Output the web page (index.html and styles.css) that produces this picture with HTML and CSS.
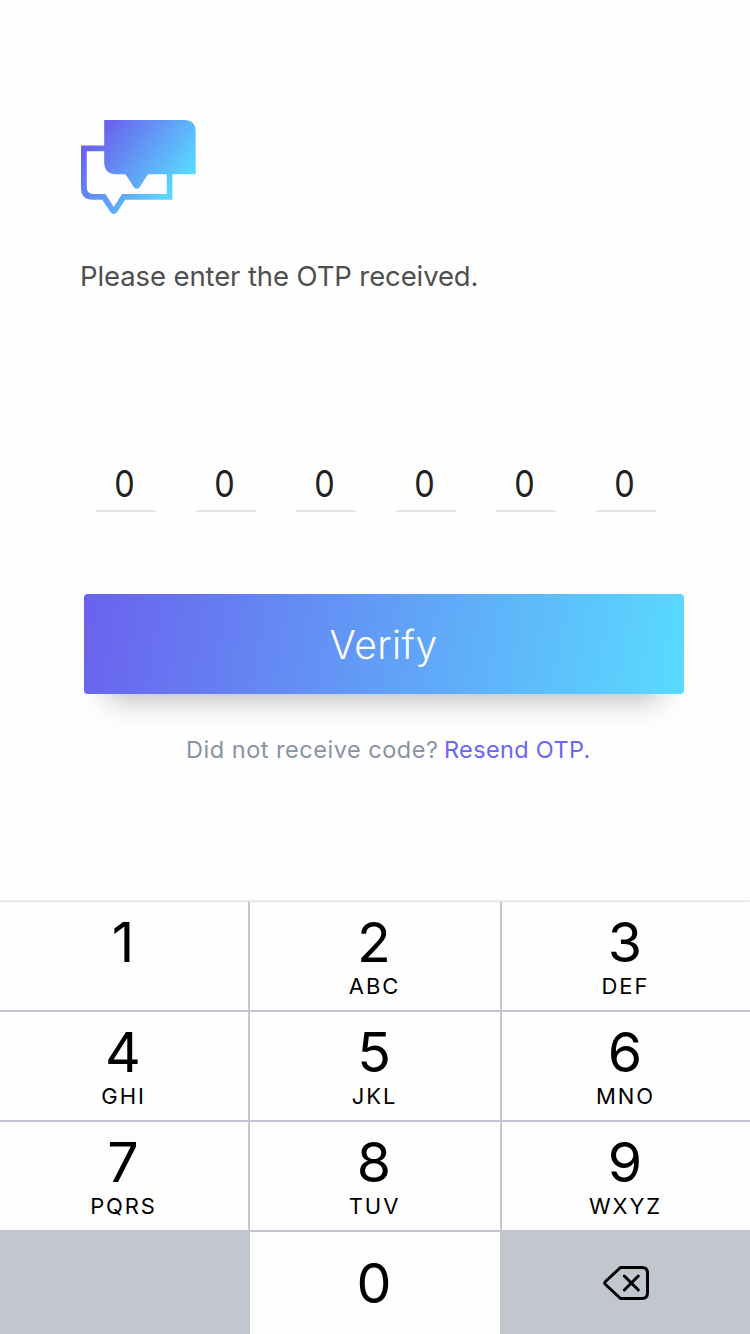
FILE: index.html
```html
<!DOCTYPE html>
<html lang="en">
<head>
<meta charset="utf-8">
<title>Verify OTP</title>
<link rel="stylesheet" href="styles.css">
</head>
<body>
<main class="screen">
  <section class="content">
    <svg class="logo" width="116" height="96" viewBox="80 119 116 96" aria-hidden="true">
      <defs>
        <linearGradient id="front" gradientUnits="userSpaceOnUse" x1="108" y1="120" x2="188" y2="180"><stop offset="0" stop-color="#6a61ee"/><stop offset="1" stop-color="#59dbff"/></linearGradient>
        <linearGradient id="back" gradientUnits="userSpaceOnUse" x1="86" y1="146" x2="164" y2="206"><stop offset="0" stop-color="#6a61ee"/><stop offset="1" stop-color="#59dbff"/></linearGradient>
      </defs>
      <path fill="url(#back)" fill-rule="evenodd" d="M81 145.4H105V151.2H86.8V187.5Q86.8 194 93 194H105.5L113.7 207L122 194H166.8V174H172.4V199.8H125.2L118 210.8Q113.7 217.8 109.5 210.8L102.2 199.8H93Q81 199.8 81 188Z"/>
      <path fill="url(#front)" d="M104.2 120H184Q195.7 120 195.7 132V174.3H148.5Q146 177 142 183.5Q136.8 194 131.5 183.5Q127.5 177 125 174.3H116.5Q104.2 174.3 104.2 162Z"/>
    </svg>
    <h1 class="prompt">Please enter the OTP received.</h1>
    <div class="otp">
      <div class="otp-cell"><span class="otp-digit">0</span></div>
      <div class="otp-cell"><span class="otp-digit">0</span></div>
      <div class="otp-cell"><span class="otp-digit">0</span></div>
      <div class="otp-cell"><span class="otp-digit">0</span></div>
      <div class="otp-cell"><span class="otp-digit">0</span></div>
      <div class="otp-cell"><span class="otp-digit">0</span></div>
    </div>
    <button class="verify" type="button">Verify</button>
    <p class="resend"><span class="question">Did not receive code?</span><a class="resend-link">Resend OTP.</a></p>
  </section>
  <section class="keypad">
    <div class="key"><span class="num">1</span></div>
    <div class="key"><span class="num">2</span><span class="letters">ABC</span></div>
    <div class="key"><span class="num">3</span><span class="letters">DEF</span></div>
    <div class="key"><span class="num">4</span><span class="letters">GHI</span></div>
    <div class="key"><span class="num">5</span><span class="letters">JKL</span></div>
    <div class="key"><span class="num">6</span><span class="letters">MNO</span></div>
    <div class="key"><span class="num">7</span><span class="letters">PQRS</span></div>
    <div class="key"><span class="num">8</span><span class="letters">TUV</span></div>
    <div class="key"><span class="num">9</span><span class="letters">WXYZ</span></div>
    <div class="key blank"></div>
    <div class="key zero"><span class="num">0</span></div>
    <div class="key blank delete">
      <svg width="48" height="36" viewBox="602 1265 48 36" fill="none" stroke="#000" stroke-width="3" stroke-linecap="round" stroke-linejoin="round" aria-label="Delete">
        <path d="M620.5 1267.5H642Q647.5 1267.5 647.5 1273V1293Q647.5 1298.5 642 1298.5H620.5L605.5 1284.5Q604 1283 605.5 1281.5Z"/>
        <path d="M624.3 1276L638.3 1290M638.3 1276L624.3 1290"/>
      </svg>
    </div>
  </section>
</main>
</body>
</html>
```
FILE: styles.css
```css
* { box-sizing: border-box; }
body {
  margin: 0;
  background: #fefefe;
  font-family: Inter, "Liberation Sans", sans-serif;
}
.screen { width: 750px; height: 1334px; display: flex; flex-direction: column; overflow: hidden; }
.content { height: 902px; padding: 119px 66px 0 80px; display: flex; flex-direction: column; align-items: flex-start; }
.logo { display: block; }
.prompt { margin: 44px 0 0; height: 34px; line-height: 34px; font-size: 27.5px; font-weight: 370; letter-spacing: -.11px; color: #4f4f4f; white-space: nowrap; }
.otp { margin: 167px 0 0 16px; display: flex; gap: 40px; }
.otp-cell { width: 60px; height: 52px; padding-right: 3px; border-bottom: 2px solid #e3e3e3; text-align: center; }
.otp-digit { display: inline-block; line-height: 49px; font-size: 36.5px; color: #212121; transform: scaleX(.89); }
.verify {
  margin: 82px 0 0 4px; width: 600px; height: 100px; padding: 0 1px 0 0; flex: none;
  border: 0; border-radius: 4px; color: #fff; font: 350 39px Inter, sans-serif; letter-spacing: .4px;
  background: linear-gradient(100deg, #6a61ee, #59dbff);
  box-shadow: 0 28px 30px -24px rgba(0, 0, 0, .3);
}
.resend { margin: 41px 0 0 106px; height: 30px; line-height: 30px; font-size: 23.5px; font-weight: 380; letter-spacing: .52px; display: flex; gap: 5.5px; white-space: nowrap; }
.question { color: #8a92a3; }
.resend-link { color: #6a68ef; letter-spacing: .34px; }
.keypad {
  flex: none; display: grid; grid-template-columns: 248px 250px 248px; grid-template-rows: 108px 108px 108px 102px;
  gap: 2px; background: #c2c6d0; box-shadow: 0 -1px 2px rgba(0, 0, 0, .17);
}
.key { background: #fefefe; color: #000; display: flex; flex-direction: column; align-items: center; padding: 10px 1px 0 0; }
.num { font-size: 55.5px; line-height: 60px; height: 60px; padding-right: 1px; }
.letters { font-size: 22px; font-weight: 380; line-height: 28px; letter-spacing: 1.9px; }
.zero { padding-top: 21px; }
.blank { background: #c2c6ce; }
.delete { padding: 33px 0 0 0; }
```
